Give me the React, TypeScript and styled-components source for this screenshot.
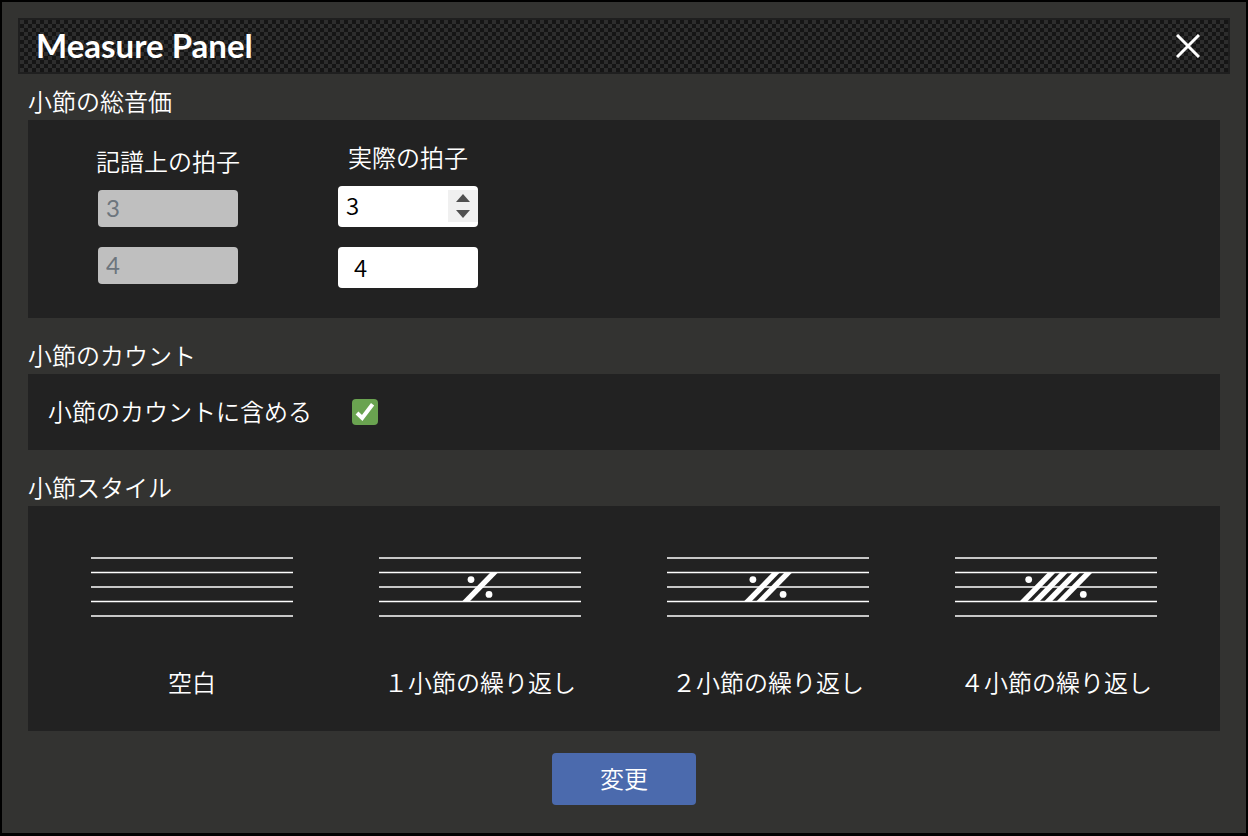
import React, { useId, useState } from "react";
import styled, { createGlobalStyle } from "styled-components";

const GlobalStyle = createGlobalStyle`
  *, *::before, *::after { box-sizing: border-box; }
  body {
    margin: 0;
    background: #000;
    color: #fff;
    font-family: "Noto Sans CJK JP", sans-serif;
    font-size: 24px;
    font-weight: 350;
    line-height: 34px;
  }
  button, input, select { font: inherit; margin: 0; border: 0; }
`;

const Panel = styled.main`
  display: flex;
  flex-direction: column;
  min-height: 100vh;
  padding: 16px 16px 28px;
  border: solid #000;
  border-width: 2px 2px 3px;
  background: #333331;
`;

const Header = styled.header`
  display: flex;
  align-items: center;
  justify-content: space-between;
  height: 56px;
  padding: 0 24px 0 16px;
  border: 2px solid #1f1f1f;
  background: repeating-conic-gradient(#151515 0 25%, #2d2d2d 0 50%) 0 0 / 8px 8px;
`;

const Title = styled.h1`
  margin: 0;
  padding-bottom: 2px;
  font-family: Lato, sans-serif;
  font-size: 33px;
  font-weight: 700;
`;

const CloseButton = styled.button`
  display: flex;
  padding: 4px;
  background: none;
  color: #fff;
  cursor: pointer;
`;

const Body = styled.div`
  display: flex;
  flex-direction: column;
  gap: 20px;
  padding: 10px 10px 0;
`;

const SectionTitle = styled.h2`
  margin: 0;
  padding-bottom: 2px;
  font-size: 24px;
  font-weight: 350;
`;

const Box = styled.div`
  padding: 20px;
  background: #222;
`;

const BeatBox = styled(Box)`
  display: flex;
  align-items: center;
  gap: 100px;
  padding: 20px 70px 30px;
`;

const BeatColumn = styled.div`
  display: flex;
  flex-direction: column;
  align-items: center;
  width: 140px;
`;

const BeatLabel = styled.label`
  margin-bottom: 12px;
  white-space: nowrap;
`;

const Fields = styled.div`
  display: grid;
  gap: 20px;
  width: 100%;
`;

const ReadonlyField = styled.input`
  width: 100%;
  height: 37px;
  padding: 0 8px 2px;
  border-radius: 4px;
  background: #bfbfbf;
  color: #6c757d;
  font-family: Lato, sans-serif;
  font-weight: 400;
`;

const Stepper = styled.div`
  display: flex;
  height: 41px;
  padding: 4px 0 5px;
  border-radius: 4px;
  background: #fff;
  overflow: hidden;
`;

const StepperInput = styled.input`
  flex: 1;
  min-width: 0;
  padding: 0 8px 2px;
  background: none;
  color: #000;
  appearance: textfield;
  &::-webkit-inner-spin-button { display: none; }
`;

const StepButtons = styled.div`
  display: grid;
  width: 30px;
  background: #f0f0f0;
`;

const StepButton = styled.button`
  display: flex;
  align-items: center;
  justify-content: center;
  padding: 0;
  background: none;
`;

const BeatSelect = styled.select`
  width: 100%;
  height: 41px;
  padding: 0 16px 2px;
  border-radius: 4px;
  background: #fff;
  color: #000;
  appearance: none;
`;

const CountRow = styled(Box)`
  display: flex;
  align-items: center;
  gap: 40px;
`;

const CountLabel = styled.label`
  padding-bottom: 2px;
`;

const CheckWrap = styled.span`
  display: grid;
  place-items: center;
  & > * { grid-area: 1 / 1; }
`;

const CheckInput = styled.input`
  width: 26px;
  height: 26px;
  border-radius: 4px;
  background: #fff;
  appearance: none;
  &:checked { background: #6aa350; }
`;

const CheckMark = styled.svg`
  pointer-events: none;
`;

const StyleGrid = styled(Box)`
  display: grid;
  grid-template-columns: repeat(4, 1fr);
  padding-bottom: 32px;
`;

const StyleOption = styled.button`
  display: flex;
  flex-direction: column;
  align-items: center;
  gap: 38px;
  padding: 20px 0 0;
  background: none;
  color: #fff;
  cursor: pointer;
`;

const SubmitButton = styled.button`
  align-self: center;
  width: 144px;
  height: 52px;
  margin-top: 22px;
  padding: 0 0 2px;
  border-radius: 4px;
  background: #4b6aad;
  color: #fff;
  cursor: pointer;
`;

/** Five-line staff, optionally carrying a repeat sign with the given number of slashes. */
function Staff({ slashes }: { slashes: number }) {
  const step = 12.3;
  const half = 18 + ((slashes - 1) * step) / 2;
  const dot = 9 + (slashes - 1) * 6.1;
  return (
    <svg width="202" height="81" viewBox="-101 -41 202 81" aria-hidden="true">
      {[-29, -14.5, 0, 14.5, 29].map((y) => (
        <path key={y} d={`M-101 ${y}H101`} stroke="#fff" strokeWidth="1.4" />
      ))}
      {Array.from({ length: slashes }, (_, i) => (
        <path key={i} d={`M${-half + i * step} 14.5h7.6l28.4 -29h-7.6z`} fill="#fff" />
      ))}
      {slashes > 0 && (
        <>
          <circle cx={-dot} cy="-7.4" r="3.4" fill="#fff" />
          <circle cx={dot} cy="7.4" r="3.4" fill="#fff" />
        </>
      )}
    </svg>
  );
}

const measureStyles = [
  { slashes: 0, label: "空白" },
  { slashes: 1, label: "１小節の繰り返し" },
  { slashes: 2, label: "２小節の繰り返し" },
  { slashes: 4, label: "４小節の繰り返し" },
];

export default function App() {
  const [beats, setBeats] = useState(3);
  const [unit, setUnit] = useState("4");
  const [counted, setCounted] = useState(true);
  const id = useId();

  return (
    <>
      <GlobalStyle />
      <Panel>
        <Header>
          <Title>Measure Panel</Title>
          <CloseButton type="button" aria-label="閉じる">
            <svg width="24" height="24" viewBox="0 0 24 24" aria-hidden="true">
              <path d="M1 1L23 23M23 1L1 23" stroke="currentColor" strokeWidth="3" />
            </svg>
          </CloseButton>
        </Header>
        <Body>
          <section>
            <SectionTitle>小節の総音価</SectionTitle>
            <BeatBox>
              <BeatColumn>
                <BeatLabel htmlFor={`${id}-written`}>記譜上の拍子</BeatLabel>
                <Fields>
                  <ReadonlyField id={`${id}-written`} value="3" disabled />
                  <ReadonlyField aria-label="記譜上の拍子の単位" value="4" disabled />
                </Fields>
              </BeatColumn>
              <BeatColumn>
                <BeatLabel htmlFor={`${id}-actual`}>実際の拍子</BeatLabel>
                <Fields>
                  <Stepper>
                    <StepperInput
                      id={`${id}-actual`}
                      type="number"
                      min={1}
                      value={beats}
                      onChange={(e) => setBeats(Number(e.target.value))}
                    />
                    <StepButtons>
                      <StepButton type="button" aria-label="増やす" onClick={() => setBeats(beats + 1)}>
                        <svg width="14" height="8" viewBox="0 0 14 8"><path d="M0 8L7 0L14 8z" fill="#505050" /></svg>
                      </StepButton>
                      <StepButton type="button" aria-label="減らす" onClick={() => setBeats(Math.max(1, beats - 1))}>
                        <svg width="14" height="8" viewBox="0 0 14 8"><path d="M0 0L7 8L14 0z" fill="#505050" /></svg>
                      </StepButton>
                    </StepButtons>
                  </Stepper>
                  <BeatSelect aria-label="実際の拍子の単位" value={unit} onChange={(e) => setUnit(e.target.value)}>
                    {["1", "2", "4", "8", "16", "32"].map((v) => (
                      <option key={v}>{v}</option>
                    ))}
                  </BeatSelect>
                </Fields>
              </BeatColumn>
            </BeatBox>
          </section>
          <section>
            <SectionTitle>小節のカウント</SectionTitle>
            <CountRow>
              <CountLabel htmlFor={`${id}-count`}>小節のカウントに含める</CountLabel>
              <CheckWrap>
                <CheckInput
                  id={`${id}-count`}
                  type="checkbox"
                  checked={counted}
                  onChange={(e) => setCounted(e.target.checked)}
                />
                <CheckMark width="26" height="26" viewBox="0 0 26 26" aria-hidden="true">
                  <path d="M5 14L10.2 19L20.6 5.2" fill="none" stroke="#fff" strokeWidth="4" />
                </CheckMark>
              </CheckWrap>
            </CountRow>
          </section>
          <section>
            <SectionTitle>小節スタイル</SectionTitle>
            <StyleGrid>
              {measureStyles.map(({ slashes, label }) => (
                <StyleOption key={label} type="button">
                  <Staff slashes={slashes} />
                  {label}
                </StyleOption>
              ))}
            </StyleGrid>
          </section>
        </Body>
        <SubmitButton type="submit">変更</SubmitButton>
      </Panel>
    </>
  );
}
